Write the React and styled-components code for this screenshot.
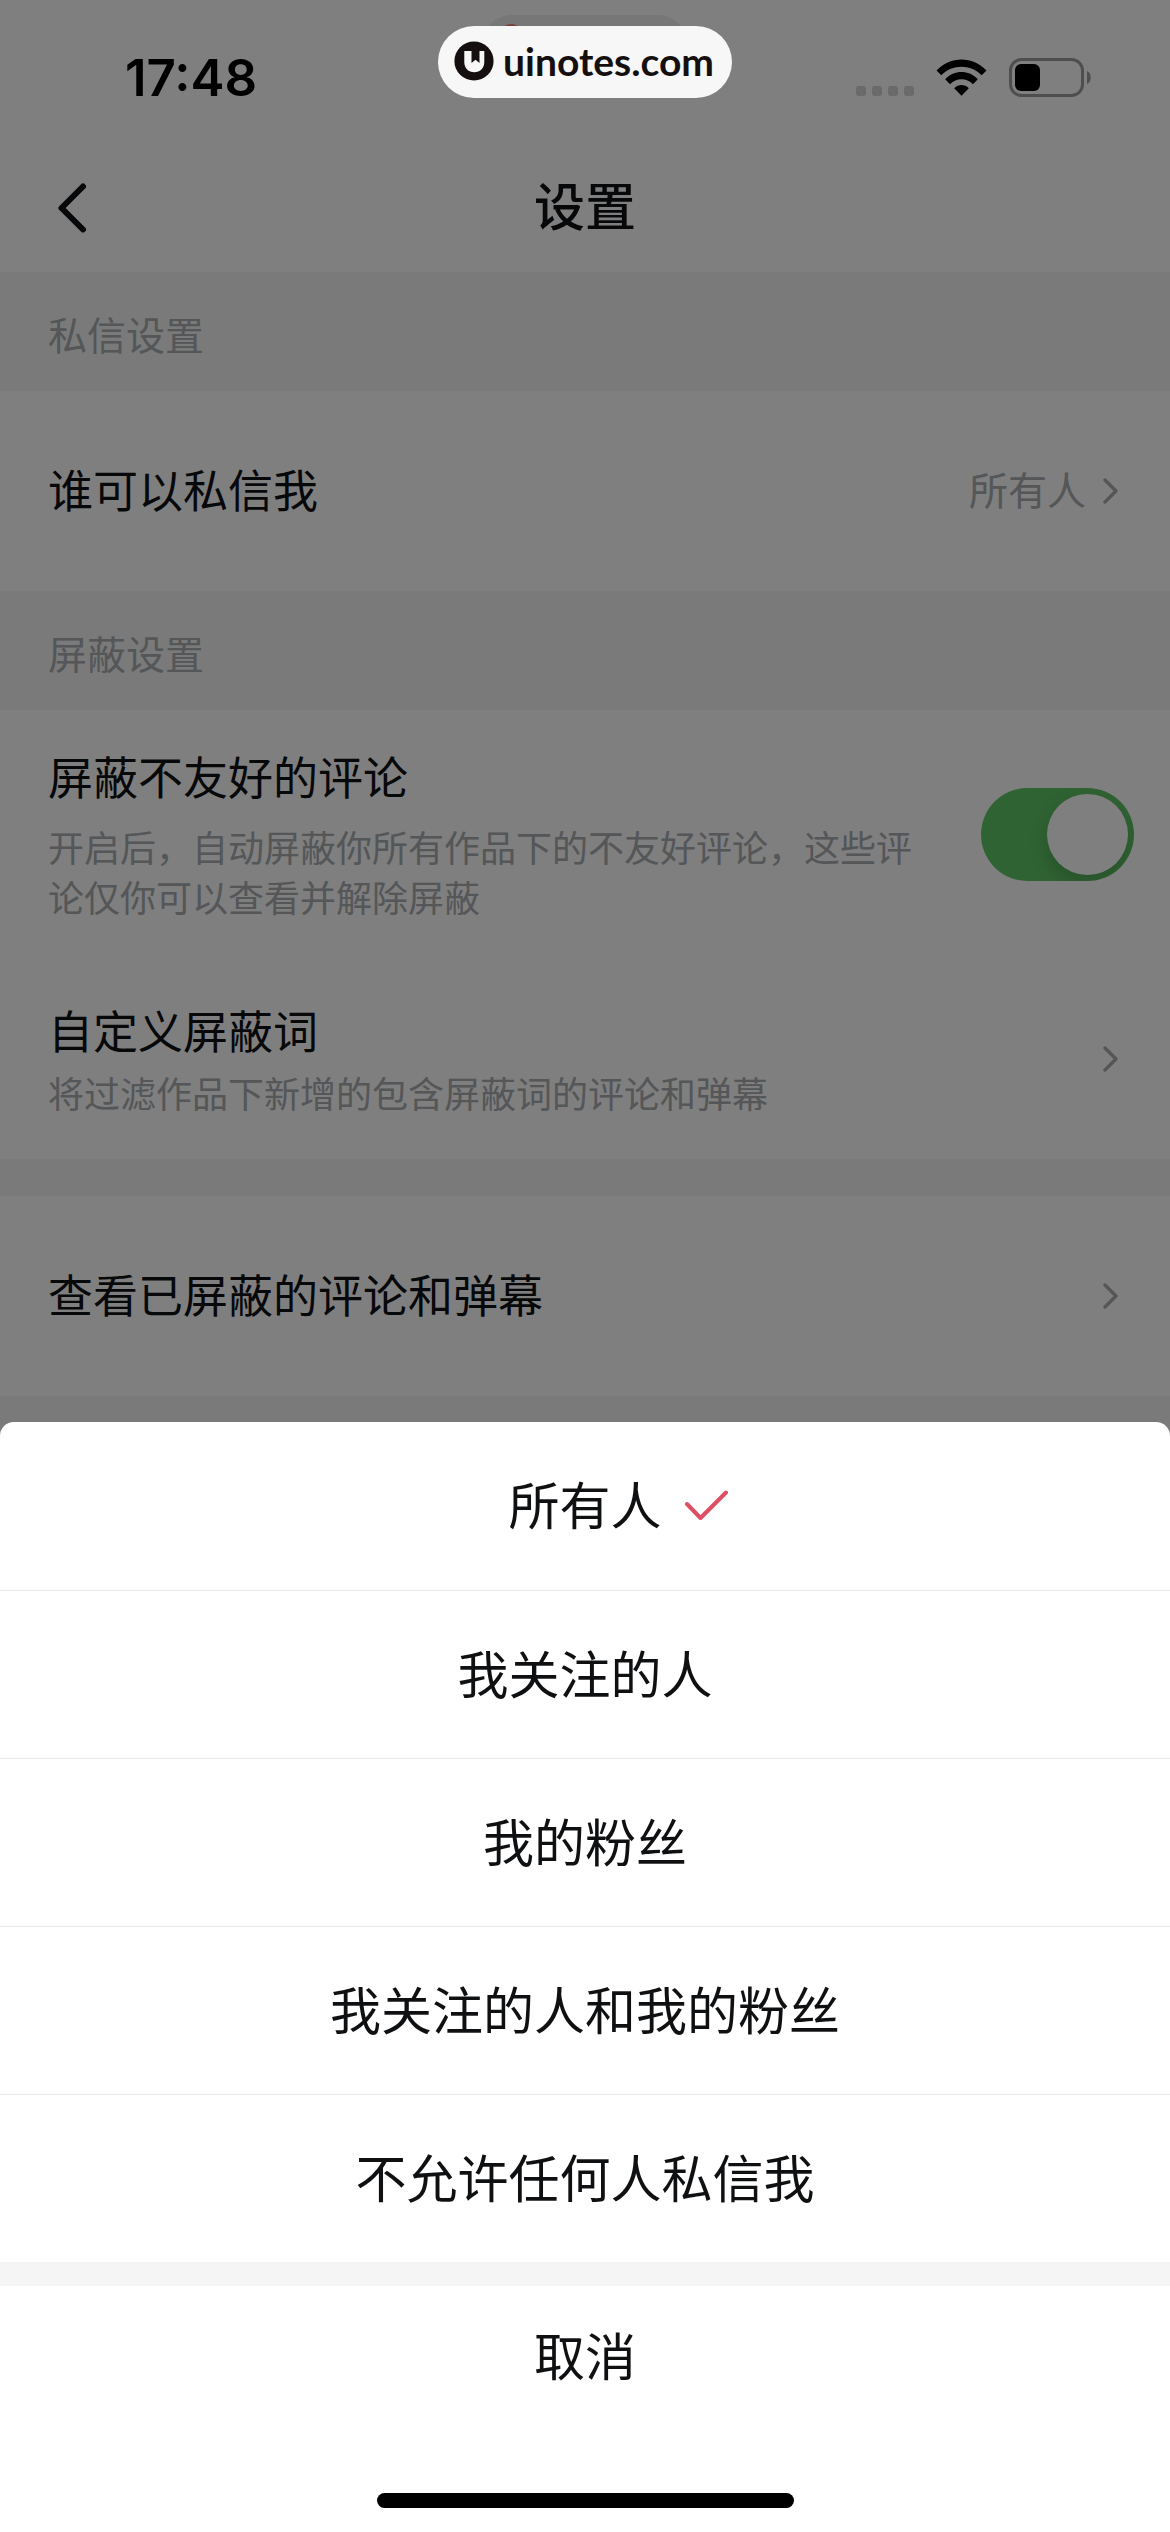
import React, { useState } from 'react'
import styled, { createGlobalStyle } from 'styled-components'

const GlobalStyle = createGlobalStyle`
  * {
    box-sizing: border-box;
  }

  body {
    margin: 0;
    background: #f5f5f5;
    color: #0f1012;
    font-family: Inter, "Noto Sans CJK SC", sans-serif;
  }

  button {
    margin: 0;
    padding: 0;
    border: 0;
    background: none;
    color: inherit;
    font: inherit;
    cursor: pointer;
  }
`

const Screen = styled.div`
  min-height: 100vh;
`

const Header = styled.header`
  background: #fff;
`

const StatusBar = styled.div`
  display: flex;
  justify-content: space-between;
  height: 142px;
  padding: 46px 79px 0 125px;
`

const Time = styled.time`
  color: #000;
  font-size: 51px;
  font-weight: 600;
  line-height: 64px;
`

const StatusIcons = styled.div`
  display: flex;
  align-items: flex-start;
  gap: 22px;
  padding-top: 12px;
`

const NavBar = styled.div`
  display: grid;
  grid-template-columns: 90px 1fr 90px;
  align-items: center;
  height: 130px;
  padding: 2px 54px 0;
`

const BackButton = styled.button`
  display: flex;
`

const Title = styled.h1`
  margin: 0;
  font-size: 51px;
  font-weight: 500;
  line-height: 64px;
  text-align: center;
`

const GroupTitle = styled.h2`
  margin: 0;
  padding: 40px 48px 31px;
  color: #a8acb0;
  font-size: 39px;
  font-weight: 400;
  line-height: 48px;
`

const Group = styled.section`
  background: #fff;
  margin-bottom: ${props => (props.$spaced ? '37px' : '0')};
`

const Row = styled.div`
  display: flex;
  align-items: center;
  justify-content: space-between;
  width: 100%;
  min-height: ${props => (props.$tall ? '249px' : '200px')};
  padding: 0 ${props => (props.$tall ? '36px' : '52px')} 0 48px;
  text-align: left;
`

const RowText = styled.span`
  display: flex;
  flex-direction: column;
  gap: ${props => props.$gap || '0'};
  max-width: 880px;
  padding-top: 2px;
`

const RowName = styled.span`
  font-size: 45px;
  line-height: 64px;
`

const RowHint = styled.span`
  color: #a8acb0;
  font-size: 36px;
  line-height: 50px;
`

const RowValue = styled.span`
  display: flex;
  align-items: center;
  gap: 16px;
  color: #a8acb0;
  font-size: 39px;
  line-height: 48px;
`

const Switch = styled.input`
  appearance: none;
  flex: none;
  display: flex;
  width: 153px;
  height: 93px;
  margin: 0;
  padding: 6px;
  border-radius: 47px;
  background: ${props => (props.checked ? '#60c766' : '#e5e5e5')};
  justify-content: ${props => (props.checked ? 'flex-end' : 'flex-start')};
  overflow: hidden;
  cursor: pointer;

  &::before {
    content: '';
    width: 81px;
    height: 81px;
    border-radius: 50%;
    background: #fff;
    box-shadow: 0 8px 22px rgba(0, 0, 0, 0.2);
  }
`

const Overlay = styled.div`
  position: fixed;
  inset: 0;
  background: rgba(0, 0, 0, 0.5);
`

const IslandHint = styled.div`
  position: fixed;
  top: 15px;
  left: 50%;
  width: 206px;
  height: 60px;
  padding: 9px 18px;
  border-radius: 30px;
  background: #777;
  transform: translateX(-50%);

  &::before {
    content: '';
    display: block;
    width: 22px;
    height: 22px;
    border-radius: 50%;
    background: #7c4038;
  }
`

const SiteBadge = styled.a`
  position: fixed;
  top: 26px;
  left: 50%;
  display: flex;
  align-items: center;
  gap: 9px;
  height: 72px;
  padding: 0 18px 2px 16px;
  border-radius: 36px;
  background: #f7f7f7;
  color: #15100f;
  font-family: Lato, sans-serif;
  font-size: 39px;
  font-weight: 700;
  line-height: 48px;
  text-decoration: none;
  transform: translateX(-50%);
`

const Sheet = styled.div`
  position: fixed;
  right: 0;
  bottom: 0;
  left: 0;
  border-radius: 14px 14px 0 0;
  background: #fff;
  overflow: hidden;
`

const Option = styled.button`
  display: grid;
  grid-template-columns: 1fr auto 1fr;
  align-items: center;
  width: 100%;
  height: 168px;
  padding-top: 2px;
  font-size: 51px;
  line-height: 64px;

  & + & {
    border-top: 1px solid #ebebeb;
  }
`

const OptionName = styled.span`
  grid-column: 2;
`

const OptionMark = styled.span`
  display: flex;
  padding: 0 0 4px 22px;
`

const Cancel = styled.button`
  display: block;
  width: 100%;
  height: 162px;
  padding-top: 6px;
  border-top: 24px solid #f5f5f5;
  font-size: 51px;
  line-height: 64px;
`

const HomeBar = styled.div`
  width: 417px;
  height: 15px;
  margin: 69px auto 24px;
  border-radius: 8px;
  background: #000;
`

const options = ['所有人', '我关注的人', '我的粉丝', '我关注的人和我的粉丝', '不允许任何人私信我']

const Signal = () => (
  <svg width="58" height="38" viewBox="0 0 58 38" fill="#d4d4d4" aria-hidden="true">
    <rect x="0" y="28" width="10" height="10" rx="3" />
    <rect x="16" y="28" width="10" height="10" rx="3" />
    <rect x="32" y="28" width="10" height="10" rx="3" />
    <rect x="48" y="28" width="10" height="10" rx="3" />
  </svg>
)

const Wifi = () => (
  <svg width="51" height="38" viewBox="0 0 51 38" aria-hidden="true">
    <path d="M0.5 12.5C14.5 -2.2 36.5 -2.2 50.5 12.5L45.7 17.3C34.5 6 16.5 6 5.3 17.3Z" />
    <path d="M9.2 21.3C18.3 11.7 32.7 11.7 41.8 21.3L37 26.2C30.5 19.6 20.5 19.6 14 26.2Z" />
    <path d="M18.2 30.3C22.3 26 28.7 26 32.8 30.3L25.5 37.8Z" />
  </svg>
)

const Battery = () => (
  <svg width="82" height="39" viewBox="0 0 82 39" aria-hidden="true">
    <rect x="1.5" y="1.5" width="72" height="36" rx="11" fill="none" stroke="#9c9c9c" strokeWidth="3" />
    <rect x="6" y="6" width="25" height="27" rx="6" />
    <path d="M78 13C83 15 83 24 78 26Z" fill="#9c9c9c" />
  </svg>
)

const BackIcon = () => (
  <svg width="36" height="54" viewBox="0 0 36 54" fill="none" stroke="#0f1012" strokeWidth="6" strokeLinecap="round" strokeLinejoin="round" aria-hidden="true">
    <path d="M29 5.5L7.5 27L29 48.5" />
  </svg>
)

const Chevron = () => (
  <svg width="16" height="26" viewBox="0 0 16 26" fill="none" stroke="#a8acb0" strokeWidth="3.4" strokeLinecap="round" strokeLinejoin="round" aria-hidden="true">
    <path d="M3 2L14 13L3 24" />
  </svg>
)

const CheckIcon = () => (
  <svg width="44" height="32" viewBox="0 0 44 32" fill="none" stroke="#de4f63" strokeWidth="4" strokeLinecap="round" strokeLinejoin="round" aria-hidden="true">
    <path d="M3 15L16.500 29L42 3.500" />
  </svg>
)

const BadgeLogo = () => (
  <svg width="40" height="40" viewBox="0 0 40 40" aria-hidden="true">
    <circle cx="20" cy="20" r="19.6" fill="#15100f" />
    <path d="M10.3 10H17.5V22L21.5 18.7L25.5 22V10H30.3V21C30.3 27.5 26 31.3 20.3 31.3S10.3 27.5 10.3 21Z" fill="#f7f7f7" />
  </svg>
)

const App = () => {
  const [selected, setSelected] = useState(options[0])
  const [blocking, setBlocking] = useState(true)

  return (
    <Screen>
      <GlobalStyle />
      <Header>
        <StatusBar>
          <Time>17:48</Time>
          <StatusIcons>
            <Signal />
            <Wifi />
            <Battery />
          </StatusIcons>
        </StatusBar>
        <NavBar>
          <BackButton aria-label="返回">
            <BackIcon />
          </BackButton>
          <Title>设置</Title>
        </NavBar>
      </Header>

      <GroupTitle>私信设置</GroupTitle>
      <Group>
        <Row as="button">
          <RowText>
            <RowName>谁可以私信我</RowName>
          </RowText>
          <RowValue>
            {selected}
            <Chevron />
          </RowValue>
        </Row>
      </Group>

      <GroupTitle>屏蔽设置</GroupTitle>
      <Group $spaced>
        <Row as="label" $tall>
          <RowText $gap="13px">
            <RowName>屏蔽不友好的评论</RowName>
            <RowHint>开启后，自动屏蔽你所有作品下的不友好评论，这些评论仅你可以查看并解除屏蔽</RowHint>
          </RowText>
          <Switch type="checkbox" checked={blocking} onChange={e => setBlocking(e.target.checked)} />
        </Row>
        <Row as="button">
          <RowText $gap="5px">
            <RowName>自定义屏蔽词</RowName>
            <RowHint>将过滤作品下新增的包含屏蔽词的评论和弹幕</RowHint>
          </RowText>
          <Chevron />
        </Row>
      </Group>

      <Group>
        <Row as="button">
          <RowText>
            <RowName>查看已屏蔽的评论和弹幕</RowName>
          </RowText>
          <Chevron />
        </Row>
      </Group>

      <Overlay />
      <IslandHint />
      <SiteBadge href="#">
        <BadgeLogo />
        uinotes.com
      </SiteBadge>

      <Sheet role="dialog" aria-label="谁可以私信我">
        {options.map(name => (
          <Option key={name} onClick={() => setSelected(name)}>
            <OptionName>{name}</OptionName>
            {selected === name && (
              <OptionMark>
                <CheckIcon />
              </OptionMark>
            )}
          </Option>
        ))}
        <Cancel>取消</Cancel>
        <HomeBar />
      </Sheet>
    </Screen>
  )
}

export default App
